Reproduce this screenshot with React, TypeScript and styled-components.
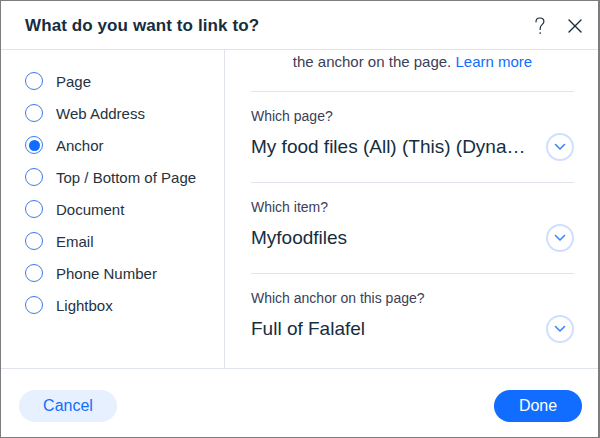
import React from "react";
import styled, { createGlobalStyle } from "styled-components";

const Global = createGlobalStyle`
  html, body { margin: 0; padding: 0; background: #fff; }
  body { font-family: "Liberation Sans", Arial, sans-serif; }
  * { box-sizing: border-box; }
`;

const Dialog = styled.div`
  width: 600px;
  height: 438px;
  border: 1px solid #7d7d7d;
  border-right-width: 2px;
  background: #fff;
  display: flex;
  flex-direction: column;
  color: #162d3d;
`;

const Header = styled.div`
  height: 49px;
  flex: none;
  display: flex;
  align-items: center;
  padding: 1px 8px 0 24px;
  border-bottom: 1px solid #dfe5eb;
`;

const Title = styled.h1`
  margin: 0;
  flex: 1;
  font-size: 17px;
  font-weight: 700;
  color: #162d3d;
  letter-spacing: 0.1px;
`;

const IconButton = styled.button`
  width: 30px;
  height: 30px;
  padding: 0;
  margin-left: 5px;
  border: none;
  background: none;
  display: flex;
  align-items: center;
  justify-content: center;
  color: #162d3d;
`;

const Body = styled.div`
  flex: 1;
  display: flex;
  min-height: 0;
`;

const Sidebar = styled.div`
  width: 224px;
  flex: none;
  border-right: 1px solid #dfe5eb;
  padding: 15px 0 0 24px;
  display: flex;
  flex-direction: column;
`;

const Option = styled.label`
  height: 32px;
  display: flex;
  align-items: center;
  gap: 13px;
  font-size: 15px;
  color: #25323f;
`;

const Radio = styled.span<{ $checked?: boolean }>`
  width: 18px;
  height: 18px;
  border-radius: 50%;
  border: 1.5px solid #3b7cf0;
  display: flex;
  align-items: center;
  justify-content: center;
  &::after {
    content: "";
    width: 11px;
    height: 11px;
    border-radius: 50%;
    background: ${(p) => (p.$checked ? "#116dff" : "transparent")};
  }
`;

const Content = styled.div`
  flex: 1;
  padding: 2px 24px 0 26px;
  display: flex;
  flex-direction: column;
  overflow: hidden;
`;

const Intro = styled.p`
  margin: 0;
  line-height: 20px;
  padding-bottom: 19px;
  text-align: center;
  font-size: 15px;
  color: #3b4057;
  border-bottom: 1px solid #dfe5eb;
`;

const Link = styled.a`
  color: #116dff;
  text-decoration: none;
`;

const Section = styled.div<{ $last?: boolean }>`
  padding: 15px 0 21px;
  border-bottom: ${(p) => (p.$last ? "none" : "1px solid #dfe5eb")};
  display: flex;
  flex-direction: column;
  gap: 8px;
`;

const FieldLabel = styled.div`
  font-size: 14px;
  line-height: 18px;
  color: #3b4057;
`;

const SelectRow = styled.div`
  height: 28px;
  display: flex;
  align-items: center;
  gap: 12px;
`;

const Value = styled.div`
  flex: 1;
  min-width: 0;
  font-size: 19px;
  color: #162d3d;
  white-space: nowrap;
  overflow: hidden;
  text-overflow: ellipsis;
`;

const Chevron = styled.span`
  width: 28px;
  height: 28px;
  flex: none;
  border-radius: 50%;
  border: 2px solid #cfe0ff;
  display: flex;
  align-items: center;
  justify-content: center;
`;

const Footer = styled.div`
  height: 69px;
  flex: none;
  border-top: 1px solid #dfe5eb;
  display: flex;
  align-items: center;
  justify-content: space-between;
  padding: 6px 16px 0 18px;
`;

const Button = styled.button<{ $primary?: boolean }>`
  height: 32px;
  border: none;
  border-radius: 16px;
  font-family: "Liberation Sans", Arial, sans-serif;
  font-size: 16px;
  padding: 0;
  width: ${(p) => (p.$primary ? "88px" : "98px")};
  background: ${(p) => (p.$primary ? "#116dff" : "#e7f0ff")};
  color: ${(p) => (p.$primary ? "#fff" : "#116dff")};
`;

const options = [
  "Page",
  "Web Address",
  "Anchor",
  "Top / Bottom of Page",
  "Document",
  "Email",
  "Phone Number",
  "Lightbox",
];

const fields = [
  { label: "Which page?", value: "My food files (All) (This) (Dynamic Pages)" },
  { label: "Which item?", value: "Myfoodfiles" },
  { label: "Which anchor on this page?", value: "Full of Falafel" },
];

const ChevronIcon = () => (
  <svg width="12" height="8" viewBox="0 0 12 8" fill="none">
    <path d="M1.5 1.5 L6 6 L10.5 1.5" stroke="#3a86ff" strokeWidth="1.6" strokeLinecap="round" strokeLinejoin="round" />
  </svg>
);

export default function App() {
  return (
    <>
      <Global />
      <Dialog>
        <Header>
          <Title>What do you want to link to?</Title>
          <IconButton aria-label="Help">
            <svg width="14" height="20" viewBox="0 0 14 20" fill="none">
              <path d="M3 5.8 C3 3.3 4.9 2 7 2 C9.2 2 10.9 3.5 10.9 5.6 C10.9 8.4 7.2 8.9 7.2 12 L7.2 13.4" stroke="#162d3d" strokeWidth="1.2" strokeLinecap="round" />
              <circle cx="7.2" cy="17" r="0.85" fill="#162d3d" />
            </svg>
          </IconButton>
          <IconButton aria-label="Close">
            <svg width="14" height="14" viewBox="0 0 14 14" fill="none">
              <path d="M1 1 L13 13 M13 1 L1 13" stroke="#162d3d" strokeWidth="1.4" strokeLinecap="round" />
            </svg>
          </IconButton>
        </Header>
        <Body>
          <Sidebar>
            {options.map((o) => (
              <Option key={o}>
                <Radio $checked={o === "Anchor"} />
                {o}
              </Option>
            ))}
          </Sidebar>
          <Content>
            <Intro>
              the anchor on the page. <Link>Learn more</Link>
            </Intro>
            {fields.map((f, i) => (
              <Section key={f.label} $last={i === fields.length - 1}>
                <FieldLabel>{f.label}</FieldLabel>
                <SelectRow>
                  <Value>{f.value}</Value>
                  <Chevron>
                    <ChevronIcon />
                  </Chevron>
                </SelectRow>
              </Section>
            ))}
          </Content>
        </Body>
        <Footer>
          <Button>Cancel</Button>
          <Button $primary>Done</Button>
        </Footer>
      </Dialog>
    </>
  );
}
